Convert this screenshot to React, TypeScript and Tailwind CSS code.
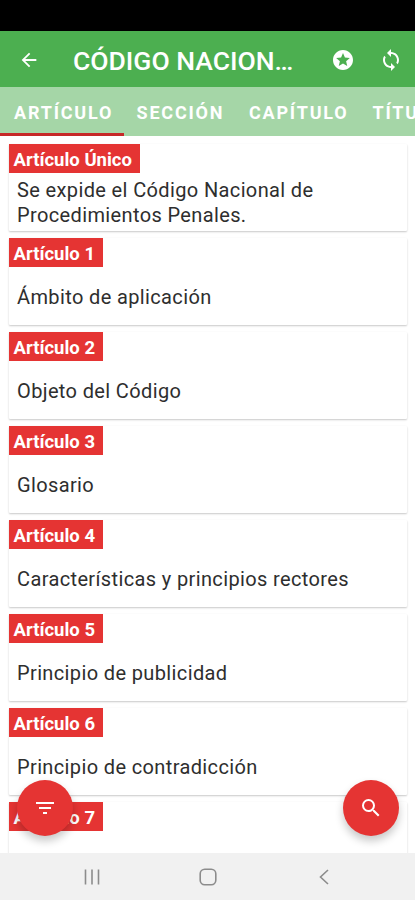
import { useState } from "react";
import {
  MdArrowBack,
  MdFilterList,
  MdSearch,
  MdStars,
  MdSync,
} from "react-icons/md";
import clsx from "clsx";

interface Article {
  label: string;
  text: string;
}

const TABS = [
  { name: "ARTÍCULO", width: "w-[124px] pl-[14px]" },
  { name: "SECCIÓN", width: "w-[112px] pl-[12.5px]" },
  { name: "CAPÍTULO", width: "w-[124px] pl-[13px]" },
  { name: "TÍTULO", width: "w-[100px] pl-[12.5px]" },
];

const ARTICLES: Article[] = [
  {
    label: "Artículo Único",
    text: "Se expide el Código Nacional de Procedimientos Penales.",
  },
  { label: "Artículo 1", text: "Ámbito de aplicación" },
  { label: "Artículo 2", text: "Objeto del Código" },
  { label: "Artículo 3", text: "Glosario" },
  { label: "Artículo 4", text: "Características y principios rectores" },
  { label: "Artículo 5", text: "Principio de publicidad" },
  { label: "Artículo 6", text: "Principio de contradicción" },
  { label: "Artículo 7", text: "" },
];

function ArticleCard({ article }: { article: Article }) {
  return (
    <article className="flex h-[87px] shrink-0 flex-col items-start rounded-[1px] bg-white shadow-[0_1px_2px_rgba(0,0,0,0.22)]">
      <h2 className="h-[29px] bg-[#e53433] pr-2 pl-[4.5px] text-[18.5px] leading-[32px] font-bold whitespace-nowrap text-white">
        {article.label}
      </h2>
      <div className="flex flex-1 items-center px-2 pt-[2px]">
        <p className="w-[340px] text-[20px] leading-[25px] tracking-[0.37px] text-[#2e2e2e]">
          {article.text}
        </p>
      </div>
    </article>
  );
}

export default function App() {
  const [activeTab, setActiveTab] = useState("ARTÍCULO");

  return (
    <div className="flex h-[900px] w-[415px] flex-col overflow-hidden bg-white font-['Roboto',sans-serif]">
      {/* Status bar */}
      <div className="h-[31px] shrink-0 bg-black" />

      {/* App bar */}
      <header className="flex h-14 shrink-0 items-center bg-[#4caf50] pt-px pl-[18px] text-white">
        <button aria-label="Atrás">
          <MdArrowBack className="size-[22px]" />
        </button>
        <h1 className="ml-[33px] w-[224px] pt-[2px] text-[26.5px] font-medium whitespace-nowrap">
          CÓDIGO NACION…
        </h1>
        <button aria-label="Favoritos" className="ml-[34px]">
          <MdStars className="size-6" />
        </button>
        <button aria-label="Actualizar" className="ml-6">
          <MdSync className="size-6" />
        </button>
      </header>

      {/* Tabs */}
      <nav className="flex h-[49px] shrink-0 bg-[#a5d6a7]">
        {TABS.map((tab) => (
          <button
            key={tab.name}
            onClick={() => setActiveTab(tab.name)}
            className={clsx(
              "shrink-0 border-b-[3px] pt-[5px] text-left text-[18px] font-bold tracking-[1.8px] text-white",
              tab.width,
              activeTab === tab.name ? "border-[#c62828]" : "border-transparent"
            )}
          >
            {tab.name}
          </button>
        ))}
      </nav>

      {/* Article list */}
      <main className="relative min-h-0 flex-1">
        <div className="flex h-full flex-col gap-[7px] overflow-hidden pt-2 pr-2 pl-[9px]">
          {ARTICLES.map((article) => (
            <ArticleCard key={article.label} article={article} />
          ))}
        </div>
        <button
          aria-label="Filtrar"
          className="absolute bottom-[17px] left-[17px] flex size-14 items-center justify-center rounded-full bg-[#e53433] text-white shadow-[0_5px_8px_rgba(0,0,0,0.22)]"
        >
          <MdFilterList className="size-6" />
        </button>
        <button
          aria-label="Buscar"
          className="absolute right-4 bottom-[17px] flex size-14 items-center justify-center rounded-full bg-[#e53433] text-white shadow-[0_5px_8px_rgba(0,0,0,0.22)]"
        >
          <MdSearch className="size-6" />
        </button>
      </main>

      {/* System navigation */}
      <footer className="flex h-[47px] shrink-0 items-center justify-between bg-[#f1f1f1] pr-[83px] pl-[84px] text-[#8c8c8c]">
        <svg width="16" height="16" viewBox="0 0 16 16" stroke="currentColor" strokeWidth="1.6">
          <path d="M1.5 0.5v15M8 0.5v15M14.5 0.5v15" />
        </svg>
        <svg width="18" height="18" viewBox="0 0 18 18" fill="none" stroke="currentColor" strokeWidth="1.6">
          <rect x="1.2" y="1.2" width="15.6" height="15.6" rx="4.5" />
        </svg>
        <svg width="16" height="16" viewBox="0 0 16 16" fill="none" stroke="currentColor" strokeWidth="1.6">
          <path d="M12 1L4.500 8l7.500 7" />
        </svg>
      </footer>
    </div>
  );
}
